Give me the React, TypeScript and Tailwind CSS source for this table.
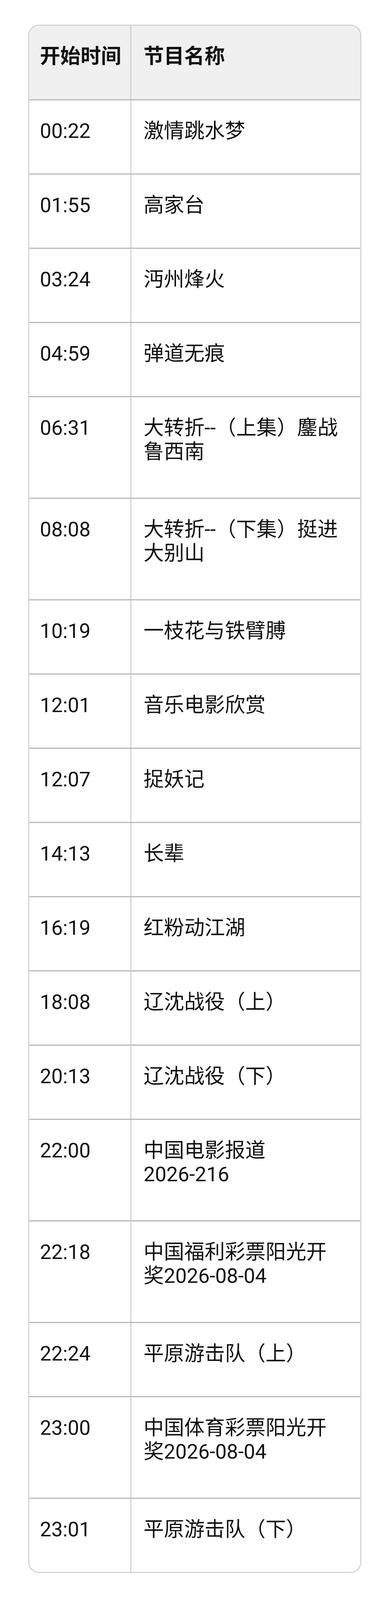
import React from 'react';

interface Programme {
  time: string;
  name: string;
  lines: 1 | 2;
}

// \u2060 (word joiner) keeps "2026-216" from breaking at the hyphen
const programmes: Programme[] = [
  { time: '00:22', name: '激情跳水梦', lines: 1 },
  { time: '01:55', name: '高家台', lines: 1 },
  { time: '03:24', name: '沔州烽火', lines: 1 },
  { time: '04:59', name: '弹道无痕', lines: 1 },
  { time: '06:31', name: '大转折--（上集）鏖战鲁西南', lines: 2 },
  { time: '08:08', name: '大转折--（下集）挺进大别山', lines: 2 },
  { time: '10:19', name: '一枝花与铁臂膊', lines: 1 },
  { time: '12:01', name: '音乐电影欣赏', lines: 1 },
  { time: '12:07', name: '捉妖记', lines: 1 },
  { time: '14:13', name: '长辈', lines: 1 },
  { time: '16:19', name: '红粉动江湖', lines: 1 },
  { time: '18:08', name: '辽沈战役（上）', lines: 1 },
  { time: '20:13', name: '辽沈战役（下）', lines: 1 },
  { time: '22:00', name: '中国电影报道2026-\u2060216', lines: 2 },
  { time: '22:18', name: '中国福利彩票阳光开奖2026-08-04', lines: 2 },
  { time: '22:24', name: '平原游击队（上）', lines: 1 },
  { time: '23:00', name: '中国体育彩票阳光开奖2026-08-04', lines: 2 },
  { time: '23:01', name: '平原游击队（下）', lines: 1 },
];

const font = { fontFamily: 'Roboto, "Noto Sans CJK SC", sans-serif' };

const App: React.FC = () => {
  return (
    <div className="min-h-screen w-full bg-white pt-[63px]" style={font}>
      <div className="ml-[72px] w-[852px] overflow-hidden rounded-[28px] border-[3px] border-[#d4d4d4] text-[52px] leading-[61px] text-[#111111]">
        {/* Header */}
        <div className="flex h-[188px] bg-[#f0f0f0] font-bold">
          <div className="w-[261px] shrink-0 border-r-[3px] border-[#d0d0d0] pl-[27px] pt-[48px]">
            开始时间
          </div>
          <div className="flex-1 pl-[31px] pr-[40px] pt-[48px]">节目名称</div>
        </div>

        {/* Rows */}
        {programmes.map((p) => (
          <div
            key={p.time}
            className={`flex border-t-[3px] border-[#b9b9b9] ${p.lines === 2 ? 'h-[260px]' : 'h-[190px]'}`}
          >
            <div className="w-[261px] shrink-0 border-r-[3px] border-[#d4d4d4] pl-[27px] pt-[48px]">
              {p.time}
            </div>
            <div className="min-w-0 flex-1 pl-[31px] pr-[40px] pt-[48px]">{p.name}</div>
          </div>
        ))}
      </div>
    </div>
  );
};

export default App;
